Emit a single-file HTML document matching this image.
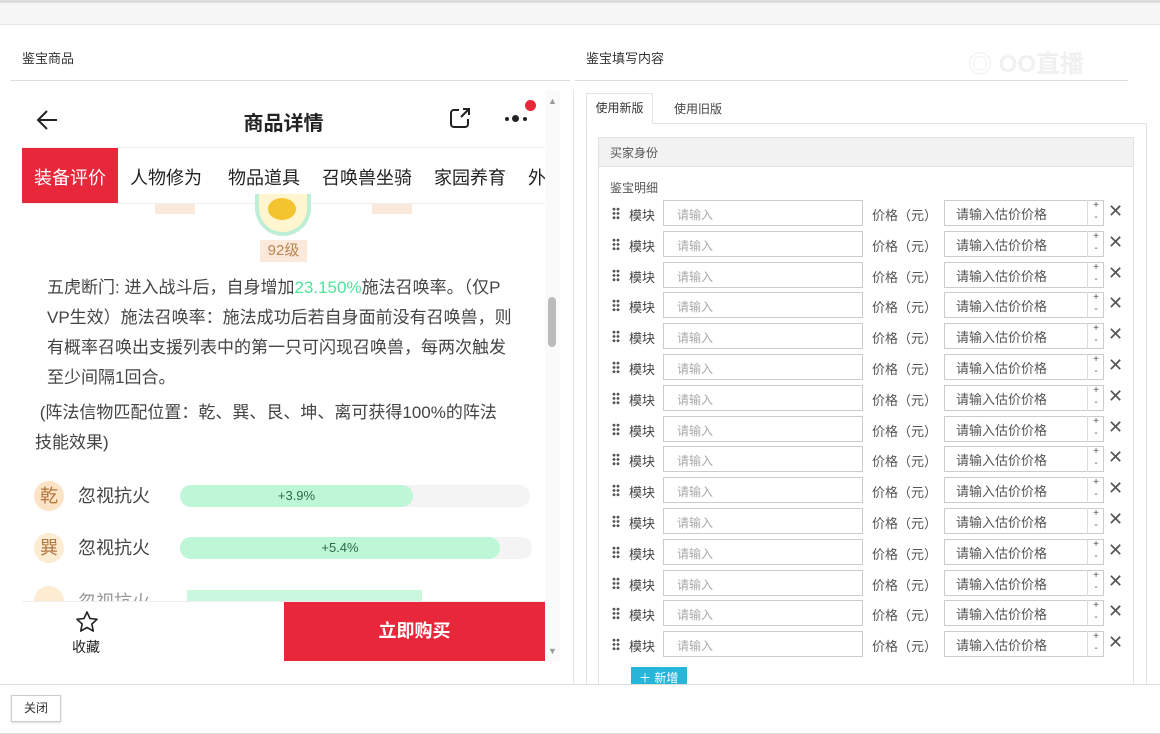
<!DOCTYPE html>
<html><head><meta charset="utf-8"><style>
*{margin:0;padding:0;box-sizing:border-box}
body{width:1160px;height:734px;overflow:hidden;background:#fff;font-family:"Liberation Sans","Noto Sans CJK SC",sans-serif;color:#333;position:relative}
.a{position:absolute}
.row{position:absolute;left:610px;height:26px;width:520px}
.row .d{position:absolute;left:2px;top:7px;width:8px;height:13px;background:radial-gradient(circle,#555 1.3px,transparent 1.6px) 0 0/4px 4.3px}
.row .m{position:absolute;left:19px;top:5px;font-size:13px;color:#444}
.row .i1{position:absolute;left:53px;top:0;width:200px;height:26px;border:1px solid #ccc;font-size:12px;color:#aaa;padding:5px 13px}
.row .p{position:absolute;left:262px;top:5px;font-size:13px;color:#555}
.row .i2{position:absolute;left:334px;top:0;width:160px;height:26px;border:1px solid #ccc;font-size:13px;color:#555;padding:3px 11px}
.row .sp{position:absolute;left:477px;top:0;width:17px;height:26px;border-left:1px solid #ddd;font-size:10px;line-height:12px;text-align:center;color:#555}
.row .x{position:absolute;left:498px;top:1px;font-size:18px;color:#555}
.tx{white-space:nowrap}
</style></head><body>
<div class="a" style="left:0;top:0;width:1160px;height:25px;background:#f7f7f7;border-top:3px solid #ddd;border-bottom:1px solid #e5e5e5"></div>
<div class="a" style="left:22px;top:48px;font-size:13px">鉴宝商品</div>
<div class="a" style="left:10px;top:80px;width:560px;height:1px;background:#ddd"></div>
<div class="a" style="left:586px;top:48px;font-size:13px">鉴宝填写内容</div>
<div class="a" style="left:575px;top:80px;width:553px;height:1px;background:#ddd"></div>
<div class="a" style="left:968px;top:44px;font-size:24px;color:#f0f0f0;font-weight:bold">◎ OO直播</div>

<!-- phone -->
<div class="a" style="left:22px;top:90px;width:523px;height:572px;overflow:hidden;background:#fff">
 <svg class="a" style="left:14px;top:18px" width="24" height="24" viewBox="0 0 24 24"><path d="M21 12H3M11 3l-9 9 9 9" fill="none" stroke="#222" stroke-width="2"/></svg>
 <div class="a" style="left:0;width:523px;top:17px;text-align:center;font-size:20px;font-weight:bold;color:#222">商品详情</div>
 <svg class="a" style="left:427px;top:17px" width="22" height="22" viewBox="0 0 22 22"><path d="M10 3H5a3 3 0 0 0-3 3v11a3 3 0 0 0 3 3h11a3 3 0 0 0 3-3v-5M12 10l8-8M14 2h6v6" fill="none" stroke="#222" stroke-width="2"/></svg>
 <div class="a" style="left:483px;top:27px;width:4px;height:4px;border-radius:50%;background:#222"></div>
 <div class="a" style="left:490px;top:25px;width:7px;height:7px;border-radius:50%;background:#222"></div>
 <div class="a" style="left:501px;top:27px;width:4px;height:4px;border-radius:50%;background:#222"></div>
 <div class="a" style="left:503px;top:10px;width:11px;height:11px;border-radius:50%;background:#e8273a"></div>
 <div class="a" style="left:0;top:57px;width:523px;height:1px;background:#eee"></div>
 <div class="a" style="left:0;top:58px;width:96px;height:55px;background:#e8273a"></div>
 <div class="a" style="left:0;top:74px;font-size:18px;color:#222;white-space:nowrap;width:600px"><span style="color:#fff;display:inline-block;width:96px;text-align:center">装备评价</span><span style="margin-left:12px">人物修为</span><span style="margin-left:26px">物品道具</span><span style="margin-left:22px">召唤兽坐骑</span><span style="margin-left:22px">家园养育</span><span style="margin-left:22px">外</span></div>
 <div class="a" style="left:0;top:113px;width:523px;height:1px;background:#eee"></div>
 <div class="a" style="left:233px;top:104px;width:56px;height:42px;border-radius:0 0 28px 28px;border:4px solid #bfeed6;border-top:none;background:#fff6d0"></div>
 <div class="a" style="left:246px;top:108px;width:28px;height:22px;border-radius:50%;background:#f4c430"></div>
 <div class="a" style="left:238px;top:150px;width:47px;height:22px;background:#fbeadb;color:#b9844e;font-size:15px;text-align:center;line-height:22px">92级</div>
 <div class="a" style="left:133px;top:114px;width:40px;height:10px;background:#fbeadb"></div>
 <div class="a" style="left:350px;top:114px;width:40px;height:10px;background:#fbeadb"></div>
 <div class="a tx" style="left:25px;top:183px;font-size:17px;line-height:30px;color:#444">五虎断门: 进入战斗后，自身增加<span style="color:#4ee39a">23.150%</span>施法召唤率。（仅P<br>VP生效）施法召唤率：施法成功后若自身面前没有召唤兽，则<br>有概率召唤出支援列表中的第一只可闪现召唤兽，每两次触发<br>至少间隔1回合。</div>
 <div class="a tx" style="left:13px;top:308px;font-size:17px;line-height:30px;color:#444">&nbsp;(阵法信物匹配位置：乾、巽、艮、坤、离可获得100%的阵法<br>技能效果)</div>
 <div class="a" style="left:12px;top:391px;width:30px;height:30px;border-radius:50%;background:#fde3c6;color:#b2763c;font-size:18px;text-align:center;line-height:30px">乾</div>
 <div class="a" style="left:56px;top:392px;font-size:18px;color:#444">忽视抗火</div>
 <div class="a" style="left:158px;top:395px;width:350px;height:22px;border-radius:11px;background:#f4f4f4"></div>
 <div class="a" style="left:158px;top:395px;width:233px;height:22px;border-radius:11px;background:#bdf7d8;text-align:center;line-height:22px;font-size:13px;color:#2c6b46">+3.9%</div>
 <div class="a" style="left:12px;top:443px;width:30px;height:30px;border-radius:50%;background:#fdebd2;color:#b2763c;font-size:18px;text-align:center;line-height:30px">巽</div>
 <div class="a" style="left:56px;top:444px;font-size:18px;color:#444">忽视抗火</div>
 <div class="a" style="left:158px;top:447px;width:352px;height:22px;border-radius:11px;background:#f4f4f4"></div>
 <div class="a" style="left:158px;top:447px;width:320px;height:22px;border-radius:11px;background:#bdf7d8;text-align:center;line-height:22px;font-size:13px;color:#2c6b46">+5.4%</div>
 <div class="a" style="left:12px;top:496px;width:30px;height:20px;border-radius:15px 15px 0 0;background:#fdebd2"></div>
 <div class="a" style="left:56px;top:498px;font-size:18px;color:#999;height:13px;overflow:hidden">忽视抗火</div>
 <div class="a" style="left:165px;top:500px;width:235px;height:11px;background:#c9f8de"></div>
 <div class="a" style="left:0;top:511px;width:523px;height:61px;background:#fff;border-top:1px solid #eee"></div>
 <svg class="a" style="left:53px;top:520px" width="24" height="24" viewBox="0 0 24 24"><path d="M12 2l3 6.5 7 .8-5.2 4.8 1.5 7L12 17.5 5.7 21l1.5-7L2 9.3l7-.8z" fill="none" stroke="#222" stroke-width="1.6" stroke-linejoin="round"/></svg>
 <div class="a" style="left:50px;top:547px;font-size:14px;color:#222">收藏</div>
 <div class="a" style="left:262px;top:512px;width:261px;height:59px;background:#e8273a;color:#fff;font-size:18px;font-weight:bold;text-align:center;line-height:59px">立即购买</div>
</div>
<div class="a" style="left:545px;top:90px;width:15px;height:572px;background:#fafafa"></div>
<div class="a" style="left:548px;top:96px;font-size:9px;color:#999">▲</div>
<div class="a" style="left:548px;top:646px;font-size:9px;color:#999">▼</div>
<div class="a" style="left:548px;top:297px;width:8px;height:50px;border-radius:4px;background:#bbb"></div>
<div class="a" style="left:573px;top:90px;width:1px;height:594px;background:#e5e5e5"></div>

<!-- right -->
<div class="a" style="left:586px;top:123px;width:561px;height:561px;border:1px solid #e2e2e2;border-bottom:none"></div>
<div class="a" style="left:586px;top:93px;width:67px;height:31px;border:1px solid #e2e2e2;border-bottom:1px solid #fff;background:#fff;font-size:12px;line-height:29px;text-align:center">使用新版</div>
<div class="a" style="left:674px;top:100px;font-size:12px;color:#444">使用旧版</div>
<div class="a" style="left:598px;top:137px;width:536px;height:547px;border:1px solid #e2e2e2;border-bottom:none"></div>
<div class="a" style="left:599px;top:138px;width:534px;height:29px;background:#f2f2f2;border-bottom:1px solid #e2e2e2;font-size:12px;color:#555;padding:6px 11px">买家身份</div>
<div class="a" style="left:610px;top:179px;font-size:12px;color:#555">鉴宝明细</div>
<div id="rows"></div>
<div class="a" style="left:631px;top:667px;width:56px;height:17px;background:#27b6d9;color:#fff;font-size:12px;padding:2px 8px;overflow:hidden">＋ 新增</div>

<div class="a" style="left:0;top:684px;width:1160px;height:1px;background:#ddd"></div>
<div class="a" style="left:11px;top:695px;width:50px;height:27px;border:1px solid #ccc;font-size:12px;text-align:center;line-height:25px;box-shadow:0 1px 2px #ddd">关闭</div>
<div class="a" style="left:0;top:733px;width:1160px;height:1px;background:#ddd"></div>
<script>
var h='';for(var k=0;k<15;k++){var t=200+k*30.8;h+='<div class="row" style="top:'+t+'px"><div class="d"></div><div class="m">模块</div><div class="i1">请输入</div><div class="p">价格（元）</div><div class="i2">请输入估价价格</div><div class="sp">+<br>-</div><div class="x">✕</div></div>';}
document.getElementById('rows').outerHTML=h;
</script>
</body></html>
